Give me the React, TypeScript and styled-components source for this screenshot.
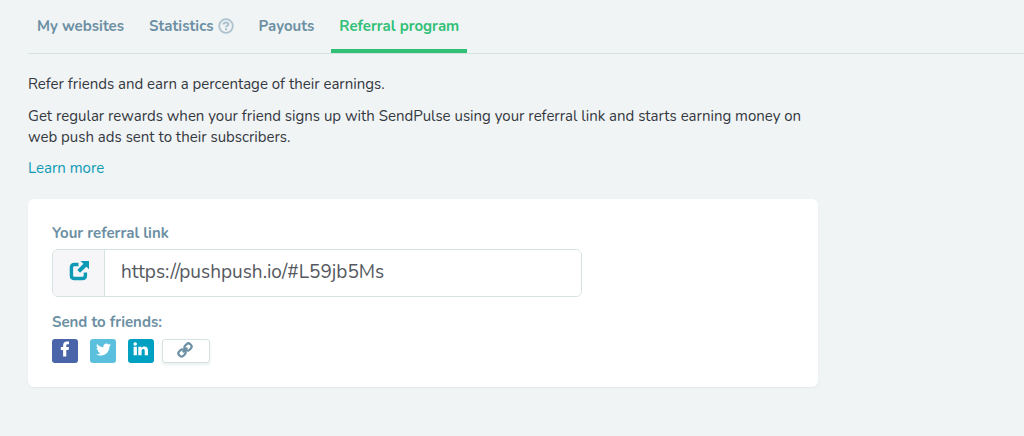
import React from 'react';
import styled, { createGlobalStyle } from 'styled-components';
import { FaTwitter } from 'react-icons/fa';

const GlobalStyle = createGlobalStyle`
  *, *::before, *::after { box-sizing: border-box; }
  body {
    margin: 0;
    background: #f0f4f5;
    color: #34383f;
    font-family: Nunito, Lato, "Liberation Sans", sans-serif;
    font-size: 15px;
    font-weight: 400;
    line-height: 21px;
  }
`;

const Page = styled.div`
  padding: 0 0 48px 28px;
`;

const Tabs = styled.nav`
  display: flex;
  gap: 9px;
  padding-left: 1px;
  border-bottom: 1px solid #d5e2e2;
`;

const Tab = styled.a<{ $active?: boolean }>`
  display: flex;
  align-items: center;
  gap: 4px;
  height: 53px;
  padding: 0 8px;
  border-bottom: 4px solid ${(p) => (p.$active ? '#32c077' : 'transparent')};
  border-top: 3px solid transparent;
  color: ${(p) => (p.$active ? '#32c077' : '#6c8fa3')};
  font-weight: 700;
  text-decoration: none;
  white-space: nowrap;
`;

const Content = styled.main`
  max-width: 790px;
  padding-top: 20px;
`;

const Text = styled.p`
  margin: 0 0 11px;
`;

const TextLink = styled.a`
  display: block;
  width: fit-content;
  margin-top: -1px;
  color: #0e9ab5;
  text-decoration: none;
`;

const Card = styled.section`
  margin-top: 20px;
  padding: 24px;
  border-radius: 6px;
  background: #fff;
  box-shadow: 0 1px 2px rgba(60, 100, 110, 0.08);
`;

const Label = styled.label`
  display: block;
  margin-bottom: 5px;
  color: #6c8fa3;
  font-weight: 700;
`;

const InputGroup = styled.div`
  display: flex;
  max-width: 530px;
  height: 48px;
  margin-bottom: 15px;
  overflow: hidden;
  border: 1px solid #d5e2e2;
  border-radius: 6px;
`;

const OpenLink = styled.a`
  display: flex;
  flex: none;
  align-items: center;
  justify-content: center;
  width: 52px;
  padding-bottom: 4px;
  border-right: 1px solid #d5e2e2;
  background: #f6f6f9;
  color: #0e9ab5;
`;

const LinkInput = styled.input`
  flex: 1;
  min-width: 0;
  padding: 0 16px 2px;
  border: 0;
  outline: 0;
  background: #fff;
  color: #555960;
  font-family: inherit;
  font-size: 19px;
`;

const ShareTitle = styled.div`
  margin-bottom: 6px;
  color: #6c8fa3;
  font-weight: 700;
`;

const ShareRow = styled.div`
  display: flex;
  gap: 12px;
`;

const ShareButton = styled.button<{ $color: string }>`
  display: flex;
  align-items: center;
  justify-content: center;
  width: 26px;
  height: 24px;
  padding: 0 0 4px;
  border: 0;
  border-radius: 3px;
  background: ${(p) => p.$color};
  color: #fff;
`;

const CopyButton = styled(ShareButton)`
  width: 48px;
  padding: 0 2px 2px 0;
  margin-left: -4px;
  border: 1px solid #d5e2e2;
  box-shadow: 0 2px 3px rgba(60, 100, 110, 0.1);
  color: #6c8fa3;
`;

const HelpIcon = () => (
  <svg width="16" height="16" viewBox="0 0 16 16" fill="none" stroke="#adc2ce" aria-hidden="true">
    <circle cx="8" cy="8" r="6.8" strokeWidth="1.8" />
    <path d="M5.300 6.500C5.500 5 6.600 4.500 8 4.500c1.400 0 2.400.7 2.400 1.800C10.400 7.800 8.100 7.600 8.100 9.300" strokeWidth="2.200" />
    <path d="M8.100 10.200v2" strokeWidth="2.200" />
  </svg>
);

const ExternalIcon = () => (
  <svg width="20" height="20" viewBox="0 0 20 20" fill="none" aria-hidden="true">
    <path
      d="M9.500 3.500H5.500C3.300 3.500 2.400 4.500 2.400 6.500v8c0 2.100 1 3 3 3h8c2.100 0 3-.9 3-3V11.500"
      stroke="currentColor"
      strokeWidth="3.400"
    />
    <path d="M11.500 0H20v8.200l-2.600-2.400-6.300 5.900-2.800-2.800L14.400 2.700z" fill="currentColor" />
  </svg>
);

const FacebookIcon = () => (
  <svg width="10" height="16" viewBox="0 0 10 16" fill="currentColor" aria-hidden="true">
    <path d="M9 .6v2.700H7.600C6.500 3.300 6.300 3.900 6.300 4.700v1.300H9L8.600 8.900H6.300V15.500H3.100V8.900H.8V6h2.300V4.400C3.100 2 4.600.5 6.900.5 7.900.5 8.700.5 9 .6z" />
  </svg>
);

const LinkedinIcon = () => (
  <svg width="16" height="16" viewBox="0 0 16 16" fill="currentColor" aria-hidden="true">
    <circle cx="2.200" cy="3" r="1.800" />
    <path d="M.6 5.700h3.300V14.200H.6zM5.300 5.700h3.200V7c.5-.8 1.300-1.500 2.800-1.500 2.400 0 3.700 1.300 3.700 3.800v4.900h-3.300V9.800c0-1.200-.4-1.800-1.400-1.800s-1.700.7-1.700 1.800v4.400H5.300z" />
  </svg>
);

const ChainIcon = () => (
  <svg width="16" height="16" viewBox="0 0 16 16" fill="none" stroke="currentColor" strokeWidth="2.200" aria-hidden="true">
    <g transform="rotate(-45 8 8)">
      <rect x="0.200" y="5" width="7" height="6" rx="2.600" />
      <rect x="8.800" y="5" width="7" height="6" rx="2.600" />
      <path d="M4.800 8h6.400" strokeWidth="1.900" />
    </g>
  </svg>
);

export default function App() {
  return (
    <>
      <GlobalStyle />
      <Page>
        <Tabs>
          <Tab href="#websites">My websites</Tab>
          <Tab href="#statistics">
            Statistics
            <HelpIcon />
          </Tab>
          <Tab href="#payouts">Payouts</Tab>
          <Tab href="#referral" $active aria-current="page">Referral program</Tab>
        </Tabs>
        <Content>
          <Text>Refer friends and earn a percentage of their earnings.</Text>
          <Text>
            Get regular rewards when your friend signs up with SendPulse using your referral link and
            starts earning money on web push ads sent to their subscribers.
          </Text>
          <TextLink href="#learn">Learn more</TextLink>
          <Card>
            <Label htmlFor="referral-link">Your referral link</Label>
            <InputGroup>
              <OpenLink href="#open" aria-label="Open referral link">
                <ExternalIcon />
              </OpenLink>
              <LinkInput id="referral-link" readOnly value="https://pushpush.io/#L59jb5Ms" />
            </InputGroup>
            <ShareTitle>Send to friends:</ShareTitle>
            <ShareRow>
              <ShareButton type="button" $color="#4964a9" aria-label="Facebook">
                <FacebookIcon />
              </ShareButton>
              <ShareButton type="button" $color="#5bc0de" aria-label="Twitter">
                <FaTwitter size={15} />
              </ShareButton>
              <ShareButton type="button" $color="#00a0c2" aria-label="LinkedIn">
                <LinkedinIcon />
              </ShareButton>
              <CopyButton type="button" $color="#fff" aria-label="Copy link">
                <ChainIcon />
              </CopyButton>
            </ShareRow>
          </Card>
        </Content>
      </Page>
    </>
  );
}
